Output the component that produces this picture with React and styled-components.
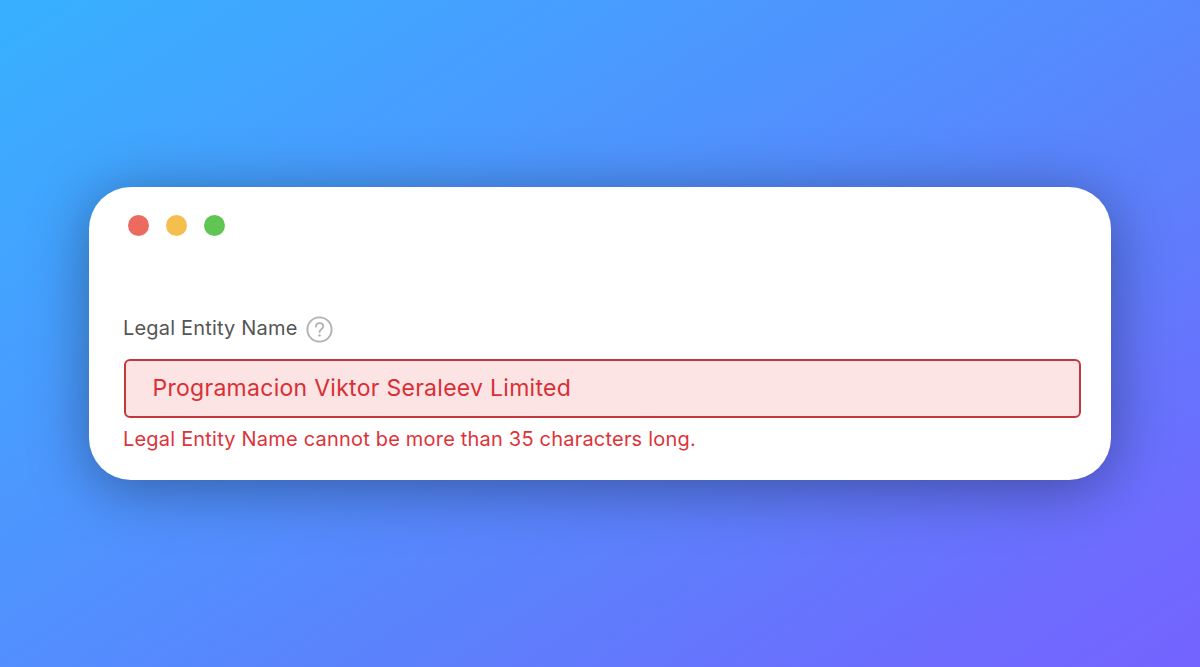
import React from 'react'
import styled, { createGlobalStyle } from 'styled-components'

const GlobalStyle = createGlobalStyle`
* { box-sizing: border-box; }
body {
    margin: 0;
    font-family: Inter, "Liberation Sans", sans-serif;
}
`

const Backdrop = styled.main`
display: flex;
justify-content: center;
align-items: center;
height: 100vh;
background: linear-gradient(147deg, #38b0ff 1%, #4b99ff 33%, #5d7ffc 66%, #7069fe 91%, #7363ff 100%);
`

const Window = styled.section`
width: 1022px;
height: 293px;
padding: 28px 30px 0 35px;
background: #fff;
border-radius: 42px;
box-shadow: 0 8px 60px rgba(0, 0, 0, 0.37);
`

const Controls = styled.div`
display: flex;
gap: 16.5px;
padding-left: 4px;
margin-bottom: 79.5px;
`

const Dot = styled.span`
width: 21.3px;
height: 21.3px;
border-radius: 50%;
background: ${({ color }) => color};
`

const Label = styled.label`
display: flex;
align-items: center;
gap: 8px;
height: 26px;
margin: 0 0 17px -1px;
padding-bottom: 2px;
font-size: 20px;
letter-spacing: 0.18px;
color: #555;
`

const HelpIcon = styled.svg`
width: 27px;
height: 27px;
position: relative;
top: 2px;
`

const Input = styled.input`
display: block;
width: 100%;
height: 59px;
padding: 0 26.5px;
border: 2px solid #c4373c;
border-radius: 6px;
outline: none;
background: #fce4e4;
color: #d92f35;
font-family: inherit;
font-size: 23px;
letter-spacing: 0.28px;
`

const ErrorText = styled.p`
margin: 9px 0 0 -1px;
line-height: 24px;
font-size: 20px;
letter-spacing: 0.2px;
color: #dc343a;
`

const Help = () => (
    <HelpIcon viewBox="0 0 27 27" fill="none" stroke="#b2b2b2" strokeWidth="1.9" strokeLinecap="round">
        <circle cx="13.5" cy="13.5" r="12.1" />
        <path d="M9.9 10.5c.1-2.1 1.6-3.4 3.7-3.4 2.1 0 3.6 1.3 3.6 3.2 0 1.3-.7 2.1-1.9 2.9-1.2.8-1.7 1.4-1.7 2.9" />
        <circle cx="13.5" cy="19.4" r="1.2" fill="#b2b2b2" stroke="none" />
    </HelpIcon>
)

const App = () => {
    return (
        <>
            <GlobalStyle />
            <Backdrop>
                <Window>
                    <Controls>
                        <Dot color="#ed6a5e" />
                        <Dot color="#f5bf4f" />
                        <Dot color="#61c554" />
                    </Controls>
                    <Label htmlFor="entity">
                        <span>Legal Entity Name</span>
                        <Help />
                    </Label>
                    <Input id="entity" defaultValue="Programacion Viktor Seraleev Limited" />
                    <ErrorText>Legal Entity Name cannot be more than 35 characters long.</ErrorText>
                </Window>
            </Backdrop>
        </>
    )
}

export default App
